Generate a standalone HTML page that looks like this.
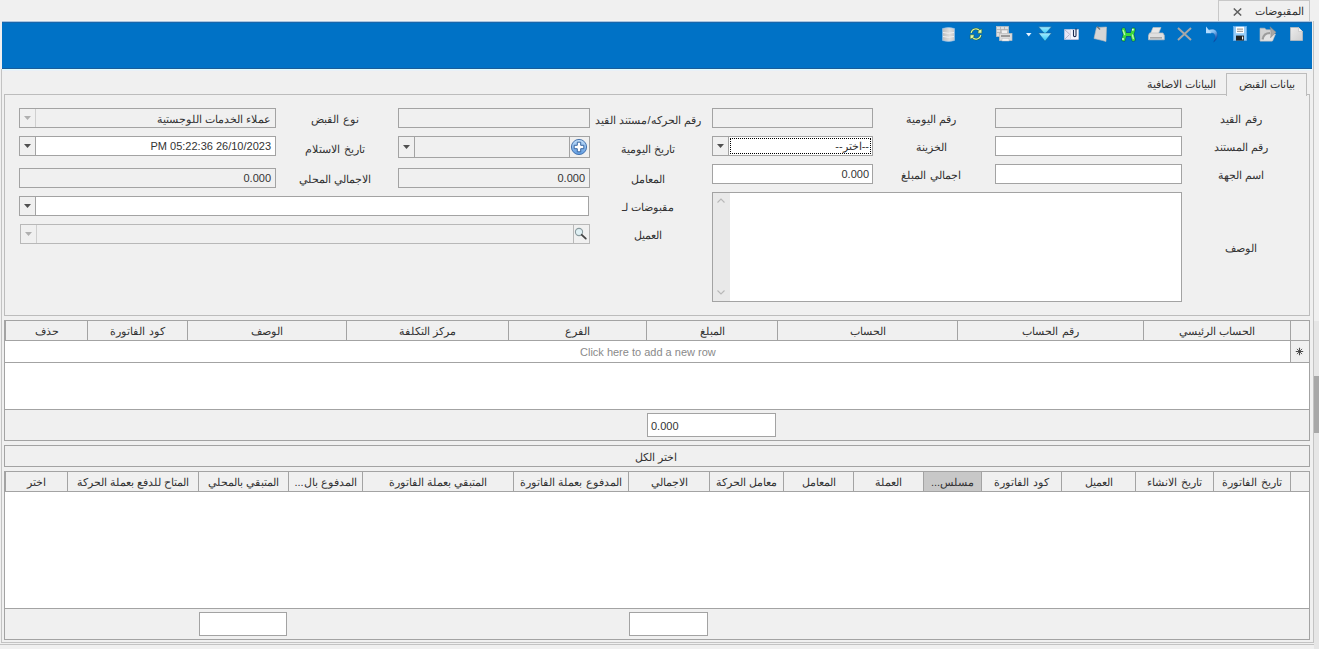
<!DOCTYPE html>
<html><head><meta charset="utf-8">
<style>
*{box-sizing:border-box;margin:0;padding:0}
html,body{width:1319px;height:649px;overflow:hidden;background:#f0f0f0;font-family:"Liberation Sans",sans-serif;font-size:11px;color:#333}
.a{position:absolute}
.t{position:absolute;white-space:nowrap;line-height:14px}
</style></head><body>
<div class="a" style="left:1218px;top:0px;width:92px;height:22px;border:1px solid #c8c8c8;background:#f0f0f0;border-bottom:none;"></div>
<div class="t" dir="rtl" style="left:1230px;top:4px;width:74px;text-align:right;">المقبوضات</div>
<svg class="a" style="left:1233px;top:8px" width="9" height="8" viewBox="0 0 9 8"><path d="M0.8 0.5L8.2 7.5M8.2 0.5L0.8 7.5" stroke="#606060" stroke-width="1.5"/></svg>
<div class="a" style="left:2px;top:21px;width:1310px;height:48px;background:#0072c6;"></div>
<div class="a" style="left:2px;top:20px;width:1216px;height:1px;background:#f6f4f2;"></div>
<div class="a" style="left:2px;top:21px;width:1310px;height:1px;background:#a8c4e0;"></div>
<div class="a" style="left:2px;top:22px;width:1310px;height:1px;background:#1a66aa;"></div>
<div class="a" style="left:2px;top:68px;width:1310px;height:1px;background:#1a5c98;"></div>
<div class="a" style="left:2px;top:69px;width:1310px;height:1px;background:#dcfcff;"></div>
<div class="a" style="left:2px;top:70px;width:1310px;height:1px;background:#e8f0f8;"></div>
<svg class="a" style="left:1290px;top:27px" width="13" height="14" viewBox="0 0 13 14"><defs><linearGradient id="gd" x1="0" y1="0" x2="1" y2="1"><stop offset="0" stop-color="#ececec"/><stop offset="1" stop-color="#cfcfcf"/></linearGradient></defs><path d="M0.5 0.5H8.5L12.5 4.5V13.5H0.5Z" fill="url(#gd)" stroke="#bdbdbd" stroke-width="0.8"/><path d="M8.5 0.5V4.5H12.5" fill="#f5f5f5" stroke="#c8c8c8" stroke-width="0.8"/></svg>
<svg class="a" style="left:1259px;top:25px" width="18" height="17" viewBox="0 0 18 17"><path d="M1 3.2H5.8L7.3 4.8H13V16H1Z" fill="#d2d2d2" stroke="#bcbcbc" stroke-width="0.6"/><path d="M5 9H16.5L13.5 16H1.2Z" fill="#e4e4e4" stroke="#c4c4c4" stroke-width="0.6"/><path d="M3.6 14.5C4.2 10.5 6.8 8 11 8" stroke="#9c9c9c" stroke-width="2" fill="none"/><path d="M11 1.8L17 7.2L11.5 12.8C12.2 10 12.2 5 11 1.8Z" fill="#a6a6a6" stroke="#8a8a8a" stroke-width="0.5"/></svg>
<svg class="a" style="left:1233px;top:26px" width="14" height="15" viewBox="0 0 14 15"><rect x="0.5" y="0.5" width="13" height="14" fill="#94ccf8" stroke="#6ab0ec" stroke-width="0.8"/><rect x="3" y="0.8" width="8" height="6.4" fill="#ffffff"/><rect x="4" y="2.6" width="6" height="1" fill="#8a8a8a"/><rect x="4" y="4.8" width="6" height="1" fill="#8a8a8a"/><rect x="3" y="9.6" width="8" height="5" fill="#202020"/><rect x="9" y="10.5" width="1.2" height="3" fill="#f0f0f0"/></svg>
<svg class="a" style="left:1205px;top:26px" width="14" height="17" viewBox="0 0 14 17"><defs><linearGradient id="gu" x1="0" y1="0" x2="0.6" y2="1"><stop offset="0" stop-color="#b8e2ff"/><stop offset="0.45" stop-color="#7ab8f0"/><stop offset="1" stop-color="#0c3c98"/></linearGradient></defs><path d="M3.5 4C9 1.8 13 4.5 12.4 10C12 12.6 10.6 14.6 8.4 16.2C9.8 13.8 10.3 12 10.1 10.2C9.8 7.5 8 6.3 5.2 7.2Z" fill="url(#gu)" stroke="#0a4aa0" stroke-width="0.4" stroke-opacity="0.5"/><path d="M1 0.5V7.2H6.5Z" fill="#b4dcff"/></svg>
<svg class="a" style="left:1177px;top:27px" width="15" height="14" viewBox="0 0 15 14"><path d="M1 1L14 13M14 1L1 13" stroke="#a8a8a8" stroke-width="2"/></svg>
<svg class="a" style="left:1148px;top:27px" width="17" height="14" viewBox="0 0 17 14"><path d="M5 0.5H13L10.5 6.5H2.5Z" fill="#e8e8e8" stroke="#c4c4c4" stroke-width="0.6"/><path d="M1.5 6H15L16.3 8.5V12.8H0.5V8.5Z" fill="#e0e0e0" stroke="#bdbdbd" stroke-width="0.7"/><rect x="2" y="10" width="12" height="1.6" fill="#a8a8a8"/></svg>
<svg class="a" style="left:1120px;top:27px" width="17" height="15" viewBox="0 0 17 15"><g fill="none" stroke-linecap="round" stroke-linejoin="round"><path d="M3.5 2.5L5 7.5L3.5 12.5M13.5 2.5L12 7.5L13.5 12.5M5 7.5H12" stroke="#0b3a4a" stroke-width="4.4" stroke-opacity="0.55"/><path d="M3.5 2.5L5 7.5L3.5 12.5M13.5 2.5L12 7.5L13.5 12.5M5 7.5H12" stroke="#3ad83a" stroke-width="3.2"/><path d="M3.2 3.5L4.6 7.5M12.5 8L13.3 11.5" stroke="#b8f8b0" stroke-width="1.4"/></g><circle cx="12.8" cy="2.8" r="1" fill="#d8fff0"/><circle cx="3" cy="12" r="0.9" fill="#d8fff0"/></svg>
<svg class="a" style="left:1093px;top:26px" width="15" height="17" viewBox="0 0 15 17"><path d="M3.5 1.5L13.5 1L13 15.5L9.5 14.5L1 12.5Z" fill="#d6d6d6" stroke="#bcbcbc" stroke-width="0.6"/><path d="M4 0.5L7 3.5" stroke="#777" stroke-width="1.4"/></svg>
<svg class="a" style="left:1064px;top:27px" width="15" height="13" viewBox="0 0 15 13"><path d="M0.5 2.5H8V12.5H0.5Z" fill="#e6e6f6" stroke="#d0d0e8" stroke-width="0.6"/><path d="M0.5 2.5L7 8.5M0.5 12.5L5 8" stroke="#a0a0b8" stroke-width="0.7"/><rect x="6.5" y="2.5" width="8" height="10" fill="#f6f6ff" stroke="#ccccdd" stroke-width="0.6"/><path d="M9.5 3V8.5C9.5 10 12 10 12 8.5V1.5" stroke="#1c2a50" stroke-width="1.1" fill="none"/><path d="M6.5 12.5H14" stroke="#bcbcd8" stroke-width="1"/></svg>
<svg class="a" style="left:1038px;top:26px" width="14" height="16" viewBox="0 0 14 16"><defs><linearGradient id="gc" x1="0" y1="0" x2="0" y2="1"><stop offset="0" stop-color="#a8ecff"/><stop offset="1" stop-color="#28c8f8"/></linearGradient></defs><path d="M0.5 0.8H13.5L7 8.2Z" fill="url(#gc)" stroke="#1a5a90" stroke-width="0.5"/><path d="M0.5 7H13.5L7 15.3Z" fill="url(#gc)" stroke="#1a5a90" stroke-width="0.5"/></svg>
<svg class="a" style="left:1026px;top:33px" width="6" height="4" viewBox="0 0 6 4"><path d="M0 0H5.5L2.75 3.5Z" fill="#e8f4ff"/></svg>
<svg class="a" style="left:996px;top:26px" width="17" height="16" viewBox="0 0 17 16"><rect x="0.5" y="0.5" width="12" height="10" fill="#e0e0e0" stroke="#c4c4c4" stroke-width="0.7"/><path d="M0.5 3.5H12.5M0.5 6.5H12.5M4.5 0.5V10.5M8.5 0.5V10.5" stroke="#b0b0b0" stroke-width="0.8"/><rect x="5.5" y="4" width="6" height="4" fill="#f0f0f0" stroke="#b0b0b0" stroke-width="0.6"/><rect x="3.5" y="7.5" width="12.5" height="7" fill="#dcdcdc" stroke="#c0c0c0" stroke-width="0.7"/><rect x="5" y="9" width="9" height="2" fill="#9a9a9a"/><rect x="6" y="12.5" width="7" height="2.5" fill="#f4f4f4" stroke="#c0c0c0" stroke-width="0.5"/></svg>
<svg class="a" style="left:969px;top:27px" width="14" height="14" viewBox="0 0 14 14"><path d="M2.2 6A4.8 4.8 0 0 1 10.8 3.8" stroke="#2d5a20" stroke-width="2.2" stroke-opacity="0.8" fill="none"/><path d="M11.8 8A4.8 4.8 0 0 1 3.2 10.2" stroke="#2d5a20" stroke-width="2.2" stroke-opacity="0.8" fill="none"/><path d="M2.2 6A4.8 4.8 0 0 1 10.8 3.8" stroke="#d8f4a0" stroke-width="1.2" fill="none"/><path d="M11.8 8A4.8 4.8 0 0 1 3.2 10.2" stroke="#d8f4a0" stroke-width="1.2" fill="none"/><path d="M9.5 3.2L12.8 2V6.2H8.8Z" fill="#e0f8a8" stroke="#2d5a20" stroke-width="0.5"/><path d="M4.5 10.8L1.2 12V7.8H5.2Z" fill="#e0f8a8" stroke="#2d5a20" stroke-width="0.5"/></svg>
<svg class="a" style="left:942px;top:27px" width="13" height="15" viewBox="0 0 13 15"><defs><linearGradient id="gdb" x1="0" y1="0" x2="1" y2="0"><stop offset="0" stop-color="#bdbdbd"/><stop offset="0.6" stop-color="#dedede"/><stop offset="1" stop-color="#c8c8c8"/></linearGradient></defs><path d="M0.5 1.5Q6.5 -0.5 12.5 1.5V13.5Q6.5 15.5 0.5 13.5Z" fill="url(#gdb)" stroke="#9cc8f0" stroke-width="0.6"/><path d="M1 5.5Q6.5 7 12 5.5M1 9.5Q6.5 11 12 9.5" stroke="#f4f4f4" stroke-width="0.9" fill="none"/></svg>
<div class="a" style="left:1px;top:69px;width:1px;height:574px;background:#c3c3c3;"></div>
<div class="a" style="left:1313px;top:21px;width:1px;height:622px;background:#c3c3c3;"></div>
<div class="a" style="left:1px;top:642px;width:1313px;height:1px;background:#c3c3c3;"></div>
<div class="a" style="left:0px;top:644px;width:1319px;height:1px;background:#c3c3c3;"></div>
<div class="a" style="left:1314px;top:321px;width:5px;height:328px;background:#e6e6e6;"></div>
<div class="a" style="left:1314px;top:376px;width:5px;height:57px;background:#a8a8a8;"></div>
<div class="a" style="left:1226px;top:73px;width:81px;height:23px;border:1px solid #bcbcbc;background:#f0f0f0;border-bottom:none;z-index:2;"></div>
<div class="t" dir="rtl" style="left:1230px;top:77px;width:65px;text-align:right;z-index:3;">بيانات القبض</div>
<div class="t" dir="rtl" style="left:1141px;top:77px;width:75px;text-align:right;">البيانات الاضافية</div>
<div class="a" style="left:4px;top:94px;width:1306px;height:222px;border:1px solid #bcbcbc;"></div>
<div class="t" dir="rtl" style="left:1091px;top:112px;width:300px;text-align:center;">رقم القيد</div>
<div class="t" dir="rtl" style="left:1091px;top:140px;width:300px;text-align:center;">رقم المستند</div>
<div class="t" dir="rtl" style="left:1091px;top:168px;width:300px;text-align:center;">اسم الجهة</div>
<div class="t" dir="rtl" style="left:1091px;top:241px;width:300px;text-align:center;">الوصف</div>
<div class="a" style="left:995px;top:108px;width:187px;height:20px;border:1px solid #a3a3a3;background:#f0f0f0;"></div>
<div class="a" style="left:995px;top:136px;width:187px;height:20px;border:1px solid #a3a3a3;background:#fff;"></div>
<div class="a" style="left:995px;top:164px;width:187px;height:20px;border:1px solid #a3a3a3;background:#fff;"></div>
<div class="a" style="left:712px;top:192px;width:470px;height:110px;border:1px solid #a3a3a3;background:#fff;"></div>
<div class="a" style="left:713px;top:193px;width:17px;height:108px;background:#e9e9e9;"></div>
<div class="t" dir="rtl" style="left:781px;top:112px;width:300px;text-align:center;">رقم اليومية</div>
<div class="t" dir="rtl" style="left:781px;top:140px;width:300px;text-align:center;">الخزينة</div>
<div class="t" dir="rtl" style="left:781px;top:168px;width:300px;text-align:center;">اجمالي المبلغ</div>
<div class="a" style="left:712px;top:108px;width:161px;height:20px;border:1px solid #a3a3a3;background:#f0f0f0;"></div>
<div class="a" style="left:712px;top:136px;width:161px;height:20px;border:1px solid #a3a3a3;background:#fff;"></div>
<div class="a" style="left:713px;top:137px;width:16px;height:18px;background:#f0f0f0;border-right:1px solid #a3a3a3;"></div>
<svg class="a" style="left:717px;top:144px" width="7" height="4" viewBox="0 0 7 4"><path d="M0 0H7L3.5 4Z" fill="#505050"/></svg>
<div class="a" style="left:730px;top:138px;width:141px;height:16px;border:1px dotted #000"></div>
<div class="t" dir="rtl" style="left:761px;top:139px;width:108px;text-align:right;">--اختر--</div>
<div class="a" style="left:712px;top:164px;width:161px;height:20px;border:1px solid #a3a3a3;background:#fff;"></div>
<div class="t" style="left:780px;top:167px;width:89px;text-align:right;">0.000</div>
<div class="t" dir="rtl" style="left:498px;top:113px;width:300px;text-align:center;">رقم الحركه/مستند القيد</div>
<div class="t" dir="rtl" style="left:498px;top:142px;width:300px;text-align:center;">تاريخ اليومية</div>
<div class="t" dir="rtl" style="left:498px;top:172px;width:300px;text-align:center;">المعامل</div>
<div class="t" dir="rtl" style="left:498px;top:200px;width:300px;text-align:center;">مقبوضات لـ</div>
<div class="t" dir="rtl" style="left:498px;top:228px;width:300px;text-align:center;">العميل</div>
<div class="a" style="left:398px;top:108px;width:192px;height:20px;border:1px solid #a3a3a3;background:#f0f0f0;"></div>
<div class="a" style="left:398px;top:136px;width:192px;height:22px;border:1px solid #a3a3a3;background:#f0f0f0;"></div>
<div class="a" style="left:399px;top:137px;width:16px;height:20px;background:#f0f0f0;border-right:1px solid #a3a3a3;"></div>
<svg class="a" style="left:403px;top:145px" width="7" height="4" viewBox="0 0 7 4"><path d="M0 0H7L3.5 4Z" fill="#505050"/></svg>
<div class="a" style="left:569px;top:137px;width:20px;height:20px;background:#f0f0f0;border-left:1px solid #a3a3a3;"></div>
<div class="a" style="left:398px;top:168px;width:192px;height:20px;border:1px solid #a3a3a3;background:#f0f0f0;"></div>
<div class="t" style="left:480px;top:171px;width:105px;text-align:right;">0.000</div>
<div class="a" style="left:19px;top:196px;width:570px;height:20px;border:1px solid #a3a3a3;background:#fff;"></div>
<div class="a" style="left:20px;top:197px;width:16px;height:18px;background:#f0f0f0;border-right:1px solid #a3a3a3;"></div>
<svg class="a" style="left:24px;top:204px" width="7" height="4" viewBox="0 0 7 4"><path d="M0 0H7L3.5 4Z" fill="#505050"/></svg>
<div class="a" style="left:20px;top:224px;width:570px;height:20px;border:1px solid #b8b8b8;background:#f0f0f0;"></div>
<div class="a" style="left:21px;top:225px;width:16px;height:18px;background:#f0f0f0;border-right:1px solid #cfcfcf;"></div>
<svg class="a" style="left:25px;top:232px" width="7" height="4" viewBox="0 0 7 4"><path d="M0 0H7L3.5 4Z" fill="#b0b0b0"/></svg>
<div class="a" style="left:573px;top:225px;width:16px;height:18px;background:#f0f0f0;border-left:1px solid #b8b8b8;"></div>
<div class="t" dir="rtl" style="left:185px;top:112px;width:300px;text-align:center;">نوع القبض</div>
<div class="t" dir="rtl" style="left:185px;top:142px;width:300px;text-align:center;">تاريخ الاستلام</div>
<div class="t" dir="rtl" style="left:185px;top:172px;width:300px;text-align:center;">الاجمالي المحلي</div>
<div class="a" style="left:19px;top:108px;width:257px;height:20px;border:1px solid #a3a3a3;background:#f0f0f0;"></div>
<div class="a" style="left:20px;top:109px;width:16px;height:18px;background:#f0f0f0;border-right:1px solid #cfcfcf;"></div>
<svg class="a" style="left:24px;top:116px" width="7" height="4" viewBox="0 0 7 4"><path d="M0 0H7L3.5 4Z" fill="#b0b0b0"/></svg>
<div class="t" dir="rtl" style="left:60px;top:112px;width:211px;text-align:right;">عملاء الخدمات اللوجستية</div>
<div class="a" style="left:19px;top:136px;width:257px;height:20px;border:1px solid #a3a3a3;background:#fff;"></div>
<div class="a" style="left:20px;top:137px;width:16px;height:18px;background:#f0f0f0;border-right:1px solid #a3a3a3;"></div>
<svg class="a" style="left:24px;top:144px" width="7" height="4" viewBox="0 0 7 4"><path d="M0 0H7L3.5 4Z" fill="#505050"/></svg>
<div class="t" style="left:60px;top:139px;width:211px;text-align:right;">PM 05:22:36 26/10/2023</div>
<div class="a" style="left:19px;top:168px;width:257px;height:20px;border:1px solid #a3a3a3;background:#f0f0f0;"></div>
<div class="t" style="left:60px;top:171px;width:211px;text-align:right;">0.000</div>
<div class="a" style="left:4px;top:320px;width:1306px;height:121px;border:1px solid #a3a3a3;background:#fff;"></div>
<div class="a" style="left:5px;top:321px;width:1304px;height:19px;background:#f0f0f0;"></div>
<div class="a" style="left:5px;top:321px;width:1px;height:19px;background:#a3a3a3;"></div>
<div class="a" style="left:4px;top:340px;width:1306px;height:1px;background:#a3a3a3;"></div>
<div class="a" style="left:4px;top:362px;width:1306px;height:1px;background:#a3a3a3;"></div>
<div class="a" style="left:5px;top:410px;width:1304px;height:30px;background:#f0f0f0;"></div>
<div class="a" style="left:4px;top:409px;width:1306px;height:1px;background:#a3a3a3;"></div>
<div class="a" style="left:647px;top:413px;width:129px;height:24px;border:1px solid #a3a3a3;background:#fff;"></div>
<div class="t" style="left:651px;top:419px;">0.000</div>
<div class="t" style="left:580px;top:345px;color:#8a8a8a;">Click here to add a new row</div>
<div class="t" dir="rtl" style="left:6px;top:324px;width:81px;text-align:center;">حذف</div>
<div class="a" style="left:87px;top:320px;width:1px;height:21px;background:#a3a3a3;"></div>
<div class="t" dir="rtl" style="left:88px;top:324px;width:99px;text-align:center;">كود الفاتورة</div>
<div class="a" style="left:187px;top:320px;width:1px;height:21px;background:#a3a3a3;"></div>
<div class="t" dir="rtl" style="left:188px;top:324px;width:158px;text-align:center;">الوصف</div>
<div class="a" style="left:346px;top:320px;width:1px;height:21px;background:#a3a3a3;"></div>
<div class="t" dir="rtl" style="left:347px;top:324px;width:161px;text-align:center;">مركز التكلفة</div>
<div class="a" style="left:508px;top:320px;width:1px;height:21px;background:#a3a3a3;"></div>
<div class="t" dir="rtl" style="left:509px;top:324px;width:137px;text-align:center;">الفرع</div>
<div class="a" style="left:646px;top:320px;width:1px;height:21px;background:#a3a3a3;"></div>
<div class="t" dir="rtl" style="left:647px;top:324px;width:130px;text-align:center;">المبلغ</div>
<div class="a" style="left:777px;top:320px;width:1px;height:21px;background:#a3a3a3;"></div>
<div class="t" dir="rtl" style="left:778px;top:324px;width:179px;text-align:center;">الحساب</div>
<div class="a" style="left:957px;top:320px;width:1px;height:21px;background:#a3a3a3;"></div>
<div class="t" dir="rtl" style="left:958px;top:324px;width:185px;text-align:center;">رقم الحساب</div>
<div class="a" style="left:1143px;top:320px;width:1px;height:21px;background:#a3a3a3;"></div>
<div class="t" dir="rtl" style="left:1144px;top:324px;width:146px;text-align:center;">الحساب الرئيسي</div>
<div class="a" style="left:1290px;top:320px;width:1px;height:21px;background:#a3a3a3;"></div>
<div class="a" style="left:1290px;top:340px;width:1px;height:22px;background:#a3a3a3;"></div>
<div class="a" style="left:1291px;top:341px;width:18px;height:21px;background:#f0f0f0;"></div>
<svg class="a" style="left:1295px;top:347px" width="9" height="9" viewBox="0 0 9 9"><g stroke="#4a4a4a" stroke-width="1.1"><path d="M4.5 0.8V8.2M0.8 4.5H8.2"/><path d="M1.9 1.9L7.1 7.1M7.1 1.9L1.9 7.1" stroke-width="0.9"/></g></svg>
<div class="a" style="left:4px;top:445px;width:1306px;height:22px;border:1px solid #a3a3a3;"></div>
<div class="t" dir="rtl" style="left:506px;top:450px;width:300px;text-align:center;">اختر الكل</div>
<div class="a" style="left:4px;top:471px;width:1306px;height:169px;border:1px solid #a3a3a3;background:#fff;"></div>
<div class="a" style="left:5px;top:472px;width:1304px;height:19px;background:#f0f0f0;"></div>
<div class="a" style="left:5px;top:472px;width:1px;height:19px;background:#a3a3a3;"></div>
<div class="a" style="left:4px;top:491px;width:1306px;height:1px;background:#a3a3a3;"></div>
<div class="a" style="left:5px;top:609px;width:1304px;height:30px;background:#f0f0f0;"></div>
<div class="a" style="left:4px;top:608px;width:1306px;height:1px;background:#a3a3a3;"></div>
<div class="a" style="left:199px;top:612px;width:88px;height:24px;border:1px solid #a3a3a3;background:#fff;"></div>
<div class="a" style="left:629px;top:612px;width:79px;height:24px;border:1px solid #a3a3a3;background:#fff;"></div>
<div class="t" dir="rtl" style="left:6px;top:475px;width:61px;text-align:center;">اختر</div>
<div class="a" style="left:67px;top:471px;width:1px;height:21px;background:#a3a3a3;"></div>
<div class="t" dir="rtl" style="left:68px;top:475px;width:130px;text-align:center;">المتاح للدفع بعملة الحركة</div>
<div class="a" style="left:198px;top:471px;width:1px;height:21px;background:#a3a3a3;"></div>
<div class="t" dir="rtl" style="left:199px;top:475px;width:89px;text-align:center;">المتبقي بالمحلي</div>
<div class="a" style="left:288px;top:471px;width:1px;height:21px;background:#a3a3a3;"></div>
<div class="t" dir="rtl" style="left:289px;top:475px;width:73px;text-align:center;">المدفوع بال...</div>
<div class="a" style="left:362px;top:471px;width:1px;height:21px;background:#a3a3a3;"></div>
<div class="t" dir="rtl" style="left:363px;top:475px;width:150px;text-align:center;">المتبقي بعملة الفاتورة</div>
<div class="a" style="left:513px;top:471px;width:1px;height:21px;background:#a3a3a3;"></div>
<div class="t" dir="rtl" style="left:514px;top:475px;width:114px;text-align:center;">المدفوع بعملة الفاتورة</div>
<div class="a" style="left:628px;top:471px;width:1px;height:21px;background:#a3a3a3;"></div>
<div class="t" dir="rtl" style="left:629px;top:475px;width:80px;text-align:center;">الاجمالي</div>
<div class="a" style="left:709px;top:471px;width:1px;height:21px;background:#a3a3a3;"></div>
<div class="t" dir="rtl" style="left:710px;top:475px;width:73px;text-align:center;">معامل الحركة</div>
<div class="a" style="left:783px;top:471px;width:1px;height:21px;background:#a3a3a3;"></div>
<div class="t" dir="rtl" style="left:784px;top:475px;width:69px;text-align:center;">المعامل</div>
<div class="a" style="left:853px;top:471px;width:1px;height:21px;background:#a3a3a3;"></div>
<div class="t" dir="rtl" style="left:854px;top:475px;width:69px;text-align:center;">العملة</div>
<div class="a" style="left:924px;top:472px;width:57px;height:19px;background:#c8c8c8;"></div>
<div class="a" style="left:923px;top:471px;width:1px;height:21px;background:#a3a3a3;"></div>
<div class="t" dir="rtl" style="left:924px;top:475px;width:57px;text-align:center;">مسلس...</div>
<div class="a" style="left:981px;top:471px;width:1px;height:21px;background:#a3a3a3;"></div>
<div class="t" dir="rtl" style="left:982px;top:475px;width:79px;text-align:center;">كود الفاتورة</div>
<div class="a" style="left:1061px;top:471px;width:1px;height:21px;background:#a3a3a3;"></div>
<div class="t" dir="rtl" style="left:1062px;top:475px;width:73px;text-align:center;">العميل</div>
<div class="a" style="left:1135px;top:471px;width:1px;height:21px;background:#a3a3a3;"></div>
<div class="t" dir="rtl" style="left:1136px;top:475px;width:77px;text-align:center;">تاريخ الانشاء</div>
<div class="a" style="left:1213px;top:471px;width:1px;height:21px;background:#a3a3a3;"></div>
<div class="t" dir="rtl" style="left:1214px;top:475px;width:76px;text-align:center;">تاريخ الفاتورة</div>
<div class="a" style="left:1290px;top:471px;width:1px;height:21px;background:#a3a3a3;"></div>
<svg class="a" style="left:570px;top:138px" width="18" height="18" viewBox="0 0 18 18"><defs><linearGradient id="gp" x1="0" y1="0" x2="0" y2="1"><stop offset="0" stop-color="#c4e0fa"/><stop offset="1" stop-color="#5d9ae0"/></linearGradient></defs><circle cx="9" cy="9" r="7.6" fill="url(#gp)" stroke="#3a6aa8" stroke-width="0.9"/><path d="M7.3 4.2H10.7V7.3H13.8V10.7H10.7V13.8H7.3V10.7H4.2V7.3H7.3Z" fill="#fff" stroke="#2a5a98" stroke-width="0.9"/></svg>
<svg class="a" style="left:574px;top:226px" width="15" height="16" viewBox="0 0 15 16"><circle cx="5" cy="6" r="3.6" fill="#dff0f4" stroke="#8a9a9e" stroke-width="1.1"/><path d="M7.8 8.8L11.8 12.6" stroke="#444" stroke-width="1.8" stroke-linecap="round"/></svg>
<svg class="a" style="left:717px;top:198px" width="8" height="5" viewBox="0 0 8 5"><path d="M0.5 4.5L4 1L7.5 4.5" stroke="#b8b8b8" stroke-width="1.1" fill="none"/></svg>
<svg class="a" style="left:717px;top:290px" width="8" height="5" viewBox="0 0 8 5"><path d="M0.5 0.5L4 4L7.5 0.5" stroke="#b8b8b8" stroke-width="1.1" fill="none"/></svg></body></html>
